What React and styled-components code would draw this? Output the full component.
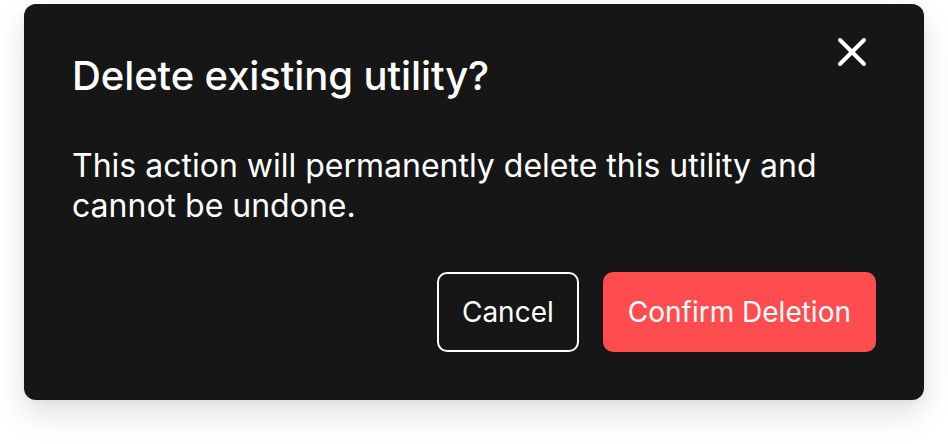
import React from "react";
import styled, { createGlobalStyle } from "styled-components";

const GlobalStyle = createGlobalStyle`
  html, body {
    margin: 0;
    padding: 0;
    background: #ffffff;
    font-family: Inter, "Noto Sans", sans-serif;
  }
`;

export default function App() {
  return (
    <>
      <GlobalStyle />
      <Page>
        <Dialog role="dialog" aria-labelledby="dlg-title">
          <Title id="dlg-title">Delete existing utility?</Title>
          <CloseButton aria-label="Close">
            <svg width="32" height="32" viewBox="0 0 32 32" fill="none">
              <path
                d="M4 4L28 28M28 4L4 28"
                stroke="#fff"
                strokeWidth="4"
                strokeLinecap="round"
              />
            </svg>
          </CloseButton>
          <Body>
            This action will permanently delete this utility and cannot be
            undone.
          </Body>
          <Actions>
            <Button>Cancel</Button>
            <Button $danger>Confirm Deletion</Button>
          </Actions>
        </Dialog>
      </Page>
    </>
  );
}

const Page = styled.div`
  padding: 4px 24px 44px;
`;

const Dialog = styled.div`
  position: relative;
  box-sizing: border-box;
  width: 900px;
  height: 396px;
  padding: 48px;
  background: #161616;
  border-radius: 12px;
  box-shadow: 0 14px 32px rgba(0, 0, 0, 0.12), 0 2px 6px rgba(0, 0, 0, 0.05);
  display: flex;
  flex-direction: column;
  color: #fff;
`;

const Title = styled.h2`
  margin: 0;
  font-size: 40px;
  line-height: 48px;
  font-weight: 500;
  letter-spacing: -0.1px;
`;

const CloseButton = styled.button`
  position: absolute;
  top: 32px;
  right: 56px;
  background: none;
  border: 0;
  padding: 0;
  width: 32px;
  height: 32px;
  cursor: pointer;
  display: flex;
`;

const Body = styled.p`
  margin: 46px 0 0;
  font-size: 32px;
  line-height: 40px;
  font-weight: 400;
  max-width: 770px;
`;

const Actions = styled.div`
  margin-top: auto;
  display: flex;
  justify-content: flex-end;
  gap: 24px;
`;

const Button = styled.button`
  box-sizing: border-box;
  height: 80px;
  padding: 0 23px;
  border-radius: 10px;
  font-family: inherit;
  font-size: 28px;
  font-weight: 400;
  color: #fff;
  cursor: pointer;
  border: 2px solid ${(p) => (p.$danger ? "#ff4c4f" : "#fff")};
  background: ${(p) => (p.$danger ? "#ff4c4f" : "transparent")};
`;
